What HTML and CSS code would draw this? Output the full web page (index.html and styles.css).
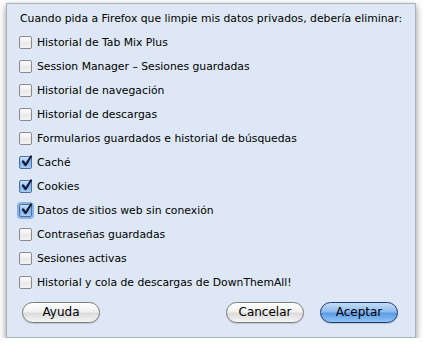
FILE: index.html
```html
<!DOCTYPE html>
<html lang="es">
<head>
<meta charset="utf-8">
<title>Borrar datos privados</title>
<link rel="stylesheet" href="styles.css">
</head>
<body>
<div class="dialog">
  <p class="intro">Cuando pida a Firefox que limpie mis datos privados, debería eliminar:</p>
  <ul class="options">
    <li class="option"><span class="box"></span><span class="label">Historial de Tab Mix Plus</span></li>
    <li class="option"><span class="box"></span><span class="label">Session Manager – Sesiones guardadas</span></li>
    <li class="option"><span class="box"></span><span class="label">Historial de navegación</span></li>
    <li class="option"><span class="box"></span><span class="label">Historial de descargas</span></li>
    <li class="option"><span class="box"></span><span class="label">Formularios guardados e historial de búsquedas</span></li>
    <li class="option"><span class="box checked"><svg viewBox="0 0 13 13"><path d="M3 6.5 L5.6 10 L11 1.5" /></svg></span><span class="label">Caché</span></li>
    <li class="option"><span class="box checked"><svg viewBox="0 0 13 13"><path d="M3 6.5 L5.6 10 L11 1.5" /></svg></span><span class="label">Cookies</span></li>
    <li class="option"><span class="box checked focused"><svg viewBox="0 0 13 13"><path d="M3 6.5 L5.6 10 L11 1.5" /></svg></span><span class="label">Datos de sitios web sin conexión</span></li>
    <li class="option"><span class="box"></span><span class="label">Contraseñas guardadas</span></li>
    <li class="option"><span class="box"></span><span class="label">Sesiones activas</span></li>
    <li class="option"><span class="box"></span><span class="label">Historial y cola de descargas de DownThemAll!</span></li>
  </ul>
  <div class="buttons">
    <button class="btn">Ayuda</button>
    <span class="spacer"></span>
    <button class="btn">Cancelar</button>
    <button class="btn default">Aceptar</button>
  </div>
</div>
</body>
</html>
```
FILE: styles.css
```css
html, body {
  margin: 0;
  padding: 0;
  background: #ffffff;
}
body {
  font-family: "DejaVu Sans", "Liberation Sans", sans-serif;
  font-size: 10.8px;
  color: #000;
}
.dialog {
  box-sizing: border-box;
  margin: 3px 0 0 6px;
  width: 410px;
  height: 335px;
  background: #dde7f5;
  border: 1px solid #a9b1bc;
  box-shadow: 0 3px 7px rgba(0, 0, 0, 0.45);
  padding: 8px 0 0 12px;
  display: flex;
  flex-direction: column;
}
.intro {
  margin: 0 0 9px 1px;
  line-height: 14px;
}
.options {
  list-style: none;
  margin: 0;
  padding: 0;
  display: flex;
  flex-direction: column;
  gap: 10.1px;
}
.option {
  display: flex;
  align-items: center;
  height: 14px;
}
.box {
  box-sizing: border-box;
  width: 13px;
  height: 13px;
  border: 1px solid #8a8a8a;
  border-radius: 2px;
  background: linear-gradient(#ffffff, #e9e9e9 60%, #f6f6f6);
  margin-right: 5px;
  flex: none;
  position: relative;
}
.box.checked {
  border-color: #4a6fa0;
  background: linear-gradient(#cfe3fb, #7fb0ec 55%, #a9cdf6);
}
.box.focused {
  box-shadow: 0 0 0 2px rgba(90, 150, 225, 0.65);
}
.box svg {
  position: absolute;
  left: 0;
  top: -2px;
  width: 13px;
  height: 13px;
  overflow: visible;
}
.box svg path {
  fill: none;
  stroke: #0c1a33;
  stroke-width: 2.2;
  stroke-linecap: round;
  stroke-linejoin: round;
}
.buttons {
  display: flex;
  align-items: center;
  margin-top: 12px;
  padding: 0 17px 0 3px;
  gap: 16px;
}
.spacer {
  flex: 1;
}
.btn {
  box-sizing: border-box;
  width: 78px;
  height: 21px;
  border-radius: 11px;
  border: 1px solid #7c7c7c;
  background: linear-gradient(#ffffff, #f1f1f1 45%, #dcdcdc 55%, #f4f4f4);
  font-family: "DejaVu Sans", "Liberation Sans", sans-serif;
  font-size: 12px;
  color: #000;
  padding: 0;
  box-shadow: 0 1px 1px rgba(0, 0, 0, 0.15);
}
.btn.default {
  border-color: #20386e;
  background: linear-gradient(#c5dcf7, #8fbcf0 45%, #5d9ce6 55%, #8ec4f6);
}
```
